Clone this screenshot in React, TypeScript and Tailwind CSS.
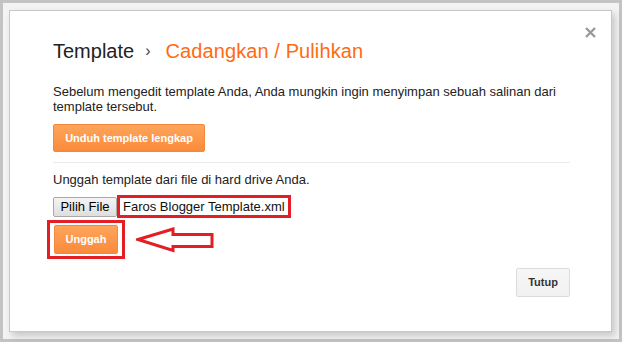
import React from 'react';

const App = () => {
  return (
    <div
      className="w-[622px] h-[342px] border-[3px] border-[#c3c3c3] bg-[#f3f3f3] pl-[6px] pt-[7px]"
      style={{ fontFamily: '"Liberation Sans", Arial, sans-serif' }}
    >
      {/* Dialog */}
      <div className="relative w-[603px] h-[322px] bg-white border border-[#c8c8c8] shadow-[3px_4px_7px_rgba(0,0,0,0.18)] pl-[43px] pr-[41px] pt-[28px]">
        {/* tombol tutup */}
        <svg className="absolute top-[16px] right-[15px]" width="11" height="11" viewBox="0 0 11 11">
          <path d="M1 1 L10 10 M10 1 L1 10" stroke="#9a9a9a" strokeWidth="2.4" />
        </svg>

        <div className="flex items-center h-[24px] text-[20px] leading-[24px]">
          <span className="text-[#222]">Template</span>
          <span className="text-[#444] ml-[11px] mr-[15px] text-[16px]">›</span>
          <span className="text-[#ff6a13] tracking-[0.1px]">Cadangkan / Pulihkan</span>
        </div>

        <p className="mt-[21px] text-[13px] leading-[15px] text-[#222]">
          Sebelum mengedit template Anda, Anda mungkin ingin menyimpan sebuah salinan dari
          <br />
          template tersebut.
        </p>

        <button className="mt-[10px] h-[28px] w-[152px] rounded-[2px] border border-[#f2893c] bg-gradient-to-b from-[#fea55a] to-[#fa8a3b] text-white text-[11px] font-bold">
          Unduh template lengkap
        </button>

        <div className="mt-[10px] h-px bg-[#ebebeb]" />

        <p className="mt-[9px] text-[13px] leading-[15px] text-[#222]">
          Unggah template dari file di hard drive Anda.
        </p>

        <div className="mt-[8px] flex items-center h-[23px]">
          <div className="h-[20px] w-[64px] flex items-center justify-center border border-[#a8a8a8] rounded-[2px] bg-gradient-to-b from-[#f4f4f4] to-[#dedede] text-[13px] text-black">
            Pilih File
          </div>
          <div className="h-[23px] flex items-center border-[3px] border-[#e31e24] pl-[3px] pr-[3px] text-[13px] text-[#111]">
            Faros Blogger Template.xml
          </div>
        </div>

        <div className="mt-[2px] flex items-center">
          <div className="-ml-[6px] border-[3px] border-[#e31e24] px-[4px] py-[2px]">
            <button className="h-[29px] w-[64px] rounded-[2px] border border-[#f2893c] bg-gradient-to-b from-[#fea55a] to-[#fa8a3b] text-white text-[11px] font-bold">
              Unggah
            </button>
          </div>
          <svg className="ml-[11px]" width="79" height="26" viewBox="0 0 79 26">
            <polygon
              points="2,12.5 37,2 37,7.5 76,7.5 76,19.5 37,19.5 37,23.5"
              fill="none"
              stroke="#e31e24"
              strokeWidth="3"
            />
          </svg>
        </div>

        <div className="mt-[9px] flex justify-end">
          <button className="h-[29px] w-[54px] rounded-[2px] border border-[#dcdcdc] bg-gradient-to-b from-[#f6f6f6] to-[#f1f1f1] text-[#333] text-[11px] font-bold">
            Tutup
          </button>
        </div>
      </div>
    </div>
  );
};

export default App;
